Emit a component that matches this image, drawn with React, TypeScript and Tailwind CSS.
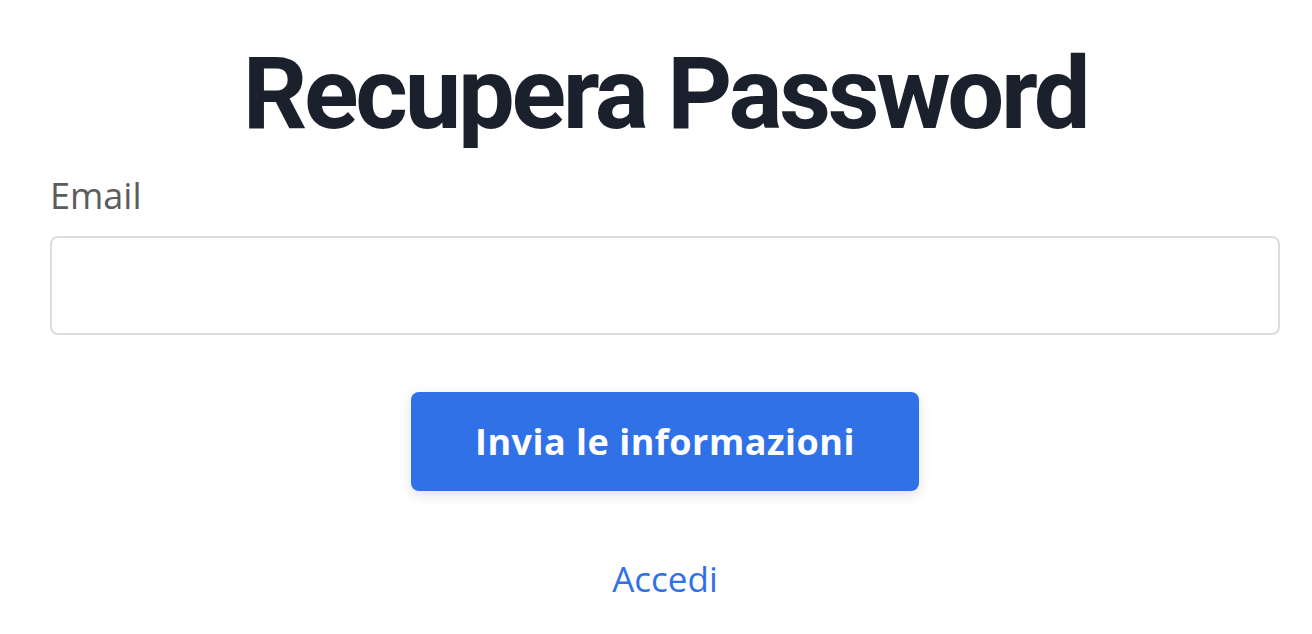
import React from "react";

export default function App() {
  return (
    <div className="min-h-screen bg-white">
      <div className="ml-[50px] mr-[32px] pt-[34px] flex flex-col" style={{ fontFamily: '"Open Sans", sans-serif' }}>
        <h1
          className="text-center font-bold text-[#1a202c] text-[101px] leading-[120px] tracking-[-3.3px]"
          style={{ fontFamily: 'Roboto, "Open Sans", sans-serif' }}
        >
          Recupera Password
        </h1>
        <label className="mt-[20px] text-[36px] leading-[44px] text-[#5c5c5c]">Email</label>
        <input
          type="email"
          className="mt-[18px] h-[99px] w-full rounded-[8px] border-2 border-[#dcdcdc] bg-white px-4 outline-none"
        />
        <div className="mt-[57px] flex justify-center">
          <button className="h-[99px] w-[508px] rounded-[8px] bg-[#3171e7] text-[36px] font-bold text-white tracking-[0.5px] shadow-[0_4px_14px_rgba(0,0,0,0.12)]">
            Invia le informazioni
          </button>
        </div>
        <div className="mt-[66px] flex justify-center">
          <a href="#" className="text-[35px] leading-[44px] text-[#3171e7]">Accedi</a>
        </div>
      </div>
    </div>
  );
}
